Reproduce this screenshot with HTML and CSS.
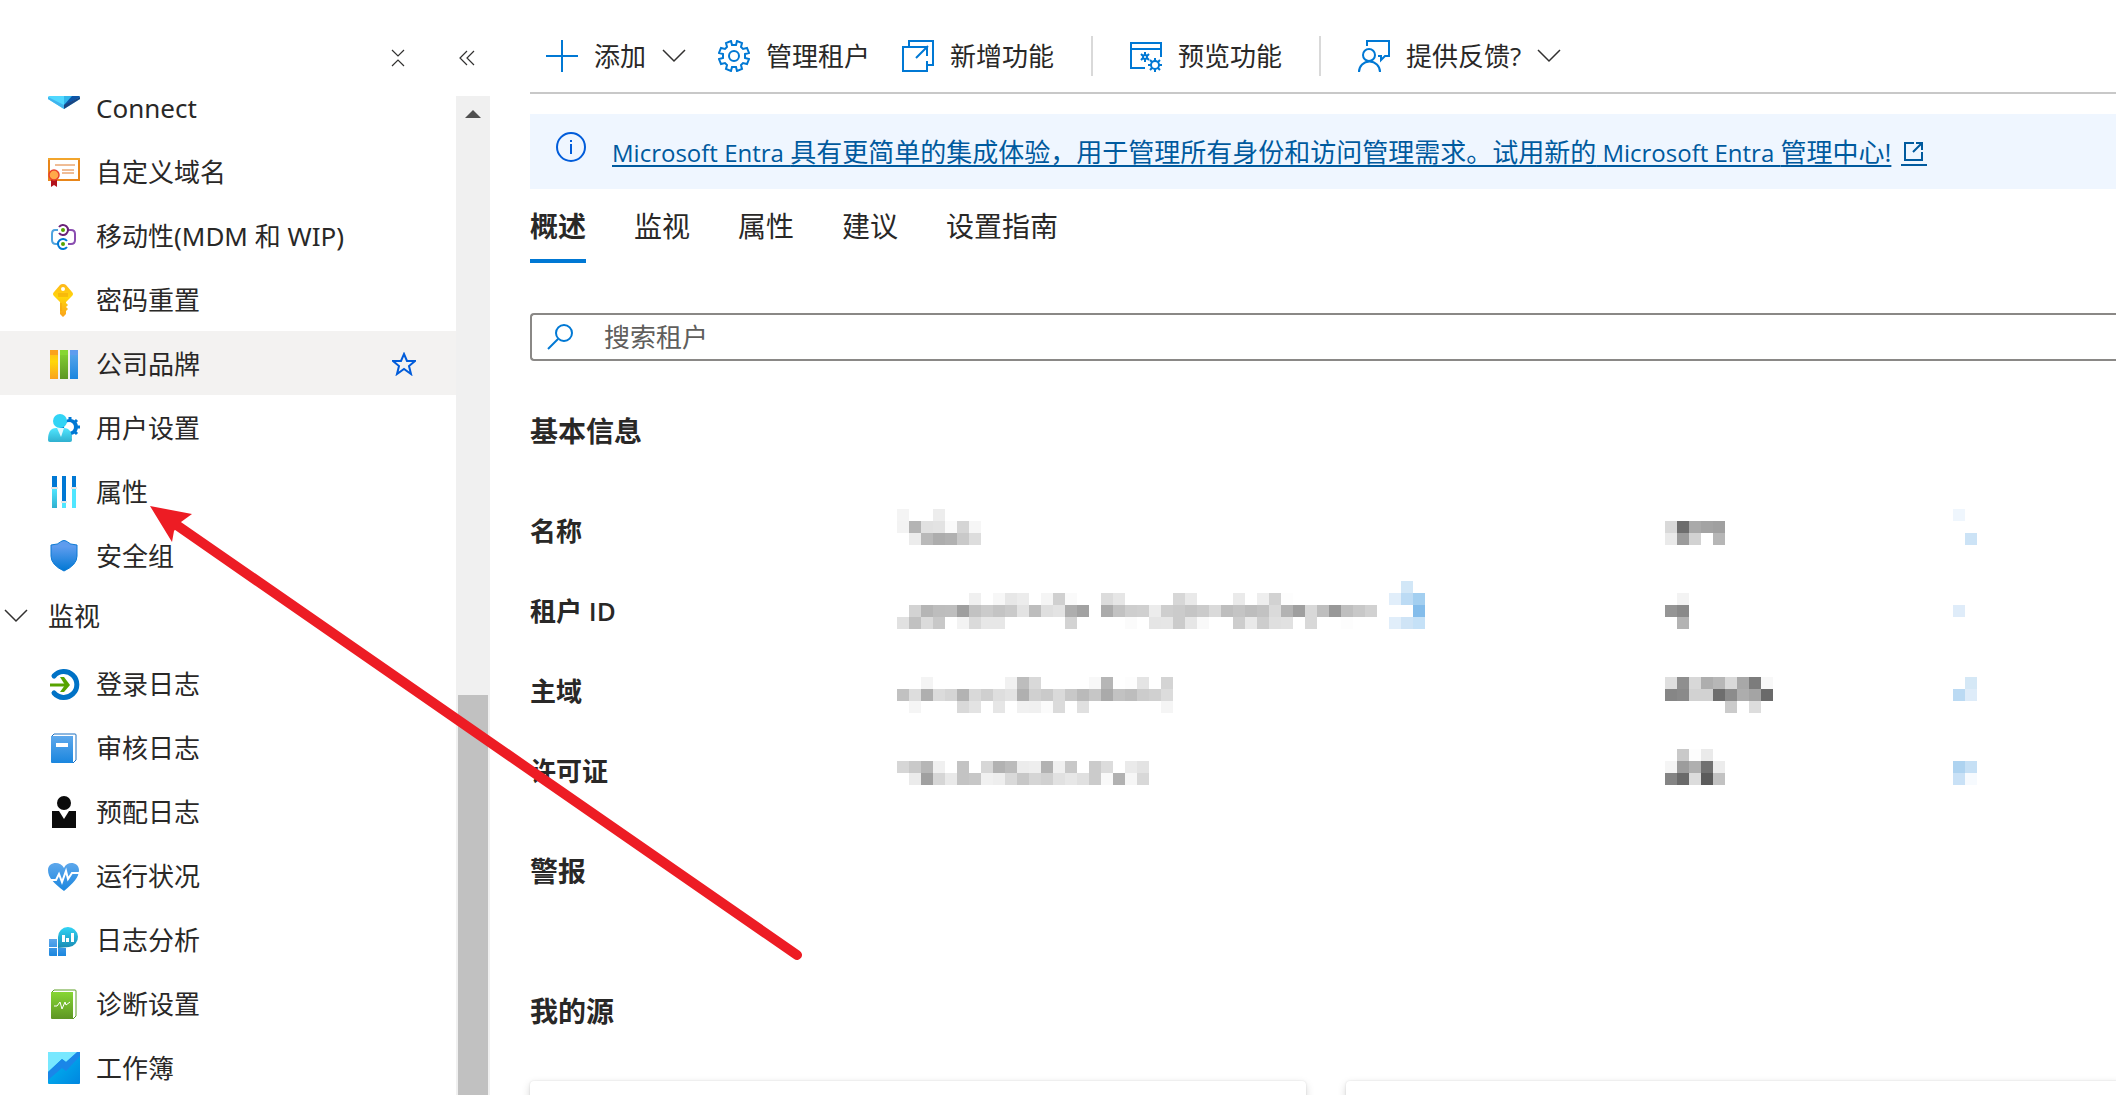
FILE: index.html
```html
<!DOCTYPE html>
<html lang="zh-CN">
<head>
    <meta charset="UTF-8">
    <meta name="viewport" content="width=device-width, initial-scale=1.0">
    <title>概述</title>
    <link rel="stylesheet" href="styles.css">
</head>
<body>
    <aside class="sidebar">
        <div class="sidebar-tools">
            <button type="button" class="icon-button" aria-label="折叠">
                <svg width="16" height="20" viewBox="0 0 16 20" class="line-icon"><path d="M2 2l6 6 6-6M2 18l6-6 6 6"/></svg>
            </button>
            <button type="button" class="icon-button" aria-label="收起">
                <svg width="18" height="20" viewBox="0 0 18 20" class="line-icon"><path d="M9 3l-7 7 7 7M16 3l-7 7 7 7"/></svg>
            </button>
        </div>

        <div class="sidebar-body">
            <nav class="menu">
                <a href="#connect" class="menu-item">
                    <svg class="menu-icon menu-icon-top" viewBox="0 0 32 32">
                        <path d="M16 2L32 20v2L16 32 0 22v-2z" fill="#50d8ff"/>
                        <path d="M16 2L32 20 16 29z" fill="#0d55a8"/>
                        <path d="M16 2v26l8-9z" fill="#32b8ec"/>
                        <path d="M0 20l16 8v4L0 22z" fill="#3fb4ee"/>
                        <path d="M16 28l16-8v2L16 32z" fill="#1b4582"/>
                    </svg>
                    <span>Connect</span>
                </a>
                <a href="#domains" class="menu-item">
                    <svg class="menu-icon" viewBox="0 0 32 32">
                        <rect x="1" y="3" width="30" height="21" fill="#fff" stroke="#e8861a" stroke-width="2"/>
                        <path d="M0 3h32" stroke="#f2a52c" stroke-width="2"/>
                        <path d="M7 9h20M14 14h12M14 17h12" stroke="#e07a2c"/>
                        <path d="M3 22h6v9l-3-2-3 2z" fill="#b3121b"/>
                        <circle cx="6" cy="19" r="5" fill="#ffa94a" stroke="#e8432c" stroke-width="1.5"/>
                    </svg>
                    <span>自定义域名</span>
                </a>
                <a href="#mobility" class="menu-item">
                    <svg class="menu-icon" viewBox="0 0 32 32" fill="none" stroke-width="2">
                        <path d="M10 10H7q-3 0-3 4v6q0 4 4 4h2" stroke="#4fa3df"/>
                        <path d="M20 10h3q4 0 4 4v6q0 4-4 4h-3" stroke="#8a4db0"/>
                        <path d="M11 7a5 5 0 1 1 0 6" stroke="#6b2278"/>
                        <path d="M19 21a5 5 0 1 0 0 6" stroke="#0078d4"/>
                        <circle cx="15" cy="10" r="2" fill="#57a300" stroke="none"/>
                        <circle cx="15" cy="24" r="2" fill="#57a300" stroke="none"/>
                    </svg>
                    <span>移动性(MDM 和 WIP)</span>
                </a>
                <a href="#password" class="menu-item">
                    <svg class="menu-icon" viewBox="0 0 32 32">
                        <path d="M15 0q2 0 3 1l6 7q2 2 0 4l-6 6v1l2 2-2 2 2 2-2 2v3l-3 3-3-3V18l-6-6q-2-2 0-4l6-7q1-1 3-1z" fill="url(#gold)"/>
                        <circle cx="15" cy="5" r="2" fill="#fff"/>
                        <path d="M10 10h10M10 12h10M13 19v8" stroke="#f0a30a"/>
                    </svg>
                    <span>密码重置</span>
                </a>
                <a href="#branding" class="menu-item menu-item-active">
                    <svg class="menu-icon" viewBox="0 0 32 32">
                        <path d="M2 2h8v29H2z" fill="url(#gold)"/><path d="M2 2h8v5H2z" fill="#faa21d"/>
                        <path d="M12 2h8v29h-8z" fill="url(#green)"/><path d="M12 2h8v5h-8z" fill="#86d633"/>
                        <path d="M22 2h8v29h-8z" fill="url(#blue)"/><path d="M22 2h8v5h-8z" fill="#5e9cee"/>
                    </svg>
                    <span>公司品牌</span>
                    <svg class="star" width="24" height="24" viewBox="0 0 24 24"><path d="M12 2l3 7h8l-6 5 2 8-7-5-7 5 2-8-6-5h8z"/></svg>
                </a>
                <a href="#user-settings" class="menu-item">
                    <svg class="menu-icon" viewBox="0 0 32 32">
                        <circle cx="22" cy="15" r="6" fill="none" stroke="#0078d4" stroke-width="4"/>
                        <path d="M22 5v4M22 21v4M12 15h20M15 8l14 14M15 22L29 8" stroke="#0078d4" stroke-width="3"/>
                        <circle cx="21" cy="15" r="5" fill="#fff"/>
                        <path d="M0 28q0-12 8-12h8q8 0 8 12 0 2-2 2H2q-2 0-2-2z" fill="url(#cyan)"/>
                        <path d="M9 16h7l-3 9z" fill="#e3f9ff"/>
                        <circle cx="12" cy="9" r="7" fill="#32d4f5"/>
                    </svg>
                    <span>用户设置</span>
                </a>
                <a href="#properties" class="menu-item">
                    <svg class="menu-icon" viewBox="0 0 32 32">
                        <path d="M4 0h5v11H4zM14 0h4v25h-4zM24 0h4v11h-4z" fill="#0078d4"/>
                        <path d="M3 11h7v2H3zM13 25h6v2h-6zM23 11h6v2h-6z" fill="#e6e6e6"/>
                        <path d="M4 13h5v19H4z" fill="url(#cyan)"/>
                        <path d="M14 27h4v5h-4zM24 13h4v19h-4z" fill="#50e6ff"/>
                    </svg>
                    <span>属性</span>
                </a>
                <a href="#security" class="menu-item">
                    <svg class="menu-icon" viewBox="0 0 32 32">
                        <path d="M3 5q7 0 11-4 2-1 4 0 4 4 11 4v11q0 9-13 15Q3 25 3 16z" fill="url(#shield)" stroke="#0a78d4"/>
                    </svg>
                    <span>安全组</span>
                </a>

                <button type="button" class="menu-group">
                    <svg width="24" height="16" viewBox="0 0 24 16" class="line-icon"><path d="M1 2l11 11L23 2"/></svg>
                    <span>监视</span>
                </button>

                <a href="#signin-logs" class="menu-item">
                    <svg class="menu-icon" viewBox="0 0 32 32" fill="none">
                        <path d="M6 8a13 13 0 1 1 0 17" stroke="#0072c6" stroke-width="5" stroke-linecap="round"/>
                        <path d="M2 17h17" stroke="#57a300" stroke-width="3"/>
                        <path d="M12 9h4l6 8-6 7h-4l5-7z" fill="#57a300"/>
                    </svg>
                    <span>登录日志</span>
                </a>
                <a href="#audit-logs" class="menu-item">
                    <svg class="menu-icon" viewBox="0 0 32 32">
                        <path d="M4 4l2-2h21q1 0 1 1v25l-3 3" fill="#fff" stroke="#1b6fc0"/>
                        <path d="M3 4h22v27H4q-1 0-1-1z" fill="url(#blue)"/>
                        <path d="M8 11h12v4H8z" fill="#fff"/>
                    </svg>
                    <span>审核日志</span>
                </a>
                <a href="#provisioning-logs" class="menu-item">
                    <svg class="menu-icon" viewBox="0 0 32 32">
                        <circle cx="16" cy="7" r="7" fill="#0b0b0b"/>
                        <path d="M4 15h7l5 8 5-8h7v17H4z" fill="#0b0b0b"/>
                    </svg>
                    <span>预配日志</span>
                </a>
                <a href="#health" class="menu-item">
                    <svg class="menu-icon" viewBox="0 0 32 32">
                        <path d="M16 31C6 23 0 18 0 10c0-8 12-10 16-2C19 0 31 2 31 10c0 8-6 13-15 21z" fill="url(#blue)"/>
                        <path d="M3 20h5l3-6 3 8 4-11 2 8 4-6h8" fill="none" stroke="#fff" stroke-width="2"/>
                    </svg>
                    <span>运行状况</span>
                </a>
                <a href="#log-analytics" class="menu-item">
                    <svg class="menu-icon" viewBox="0 0 32 32">
                        <path d="M1 15h8v8H1zM1 24h8v8H2q-1 0-1-1zM10 24h8v8h-8z" fill="url(#blue)"/>
                        <path d="M10 24V13a10 10 0 1 1 11 10z" fill="url(#cyandeep)"/>
                        <path d="M14 11h3v7h-3zM18 14h3v4h-3zM23 9h3v9h-3z" fill="#fff"/>
                    </svg>
                    <span>日志分析</span>
                </a>
                <a href="#diagnostics" class="menu-item">
                    <svg class="menu-icon" viewBox="0 0 32 32">
                        <path d="M4 4l2-2h21q1 0 1 1v25l-3 3" fill="#fff" stroke="#5c9e24"/>
                        <path d="M3 4h22v27H4q-1 0-1-1z" fill="url(#green)"/>
                        <path d="M6 18h3l3-4 2 7 3-7 1 3 4-3" fill="none" stroke="#fff"/>
                    </svg>
                    <span>诊断设置</span>
                </a>
                <a href="#workbooks" class="menu-item">
                    <svg class="menu-icon" viewBox="0 0 32 32">
                        <rect width="32" height="32" rx="1" fill="url(#sky)"/>
                        <path d="M0 0h30L18 10l-4-3L0 20z" fill="#78e8ff"/>
                        <path d="M0 20L14 7l4 3L29 0h3v4L18 19l-4-3L0 28z" fill="#1a86e8"/>
                    </svg>
                    <span>工作簿</span>
                </a>
            </nav>
            <div class="scroll-track">
                <svg width="16" height="8" viewBox="0 0 16 8"><path d="M0 8l8-8 8 8z" fill="#505050"/></svg>
                <div class="scroll-thumb"></div>
            </div>
        </div>
    </aside>

    <main class="content">
        <div class="toolbar">
            <button type="button" class="command">
                <svg class="command-icon" viewBox="0 0 32 32"><path d="M16 0v32M0 16h32"/></svg>
                添加
                <svg width="24" height="16" viewBox="0 0 24 16" class="line-icon"><path d="M1 2l11 11L23 2"/></svg>
            </button>
            <button type="button" class="command">
                <svg class="command-icon" viewBox="0 0 32 32">
                    <path d="M13 1l1 4h4l1-4 5 2-1 4 2 2 4-1 2 5-4 1v4l4 1-2 5-4-1-2 2 1 4-5 2-1-4h-4l-1 4-5-2 1-4-2-2-4 1-2-5 4-1v-4l-4-1 2-5 4 1 2-2-1-4z"/>
                    <circle cx="16" cy="16" r="5"/>
                </svg>
                管理租户
            </button>
            <button type="button" class="command">
                <svg class="command-icon" viewBox="0 0 32 32"><path d="M7 7V1h24v24h-5M17 7H1v24h24V21M14 18L26 6M17 7h8v9"/></svg>
                新增功能
            </button>
            <span class="divider"></span>
            <button type="button" class="command">
                <svg class="command-icon" viewBox="0 0 32 32">
                    <path d="M15 28H1V3h30v14M1 9h30"/>
                    <circle cx="15" cy="17" r="2"/>
                    <path d="M15 12v3M15 19v3M11 14l2 2M17 18l2 2M11 20l2-2M17 16l2-2"/>
                    <circle cx="25" cy="25" r="4"/>
                    <path d="M25 18v3M25 29v3M18 25h3M29 25h3M20 20l2 2M28 28l2 2M20 30l2-2M28 22l2-2"/>
                </svg>
                预览功能
            </button>
            <span class="divider"></span>
            <button type="button" class="command">
                <svg class="command-icon" viewBox="0 0 32 32">
                    <circle cx="11" cy="15" r="6"/>
                    <path d="M1 32a10 10 0 0 1 21 0M9 6V1h22v15h-4l-4 4v-4h-3"/>
                </svg>
                提供反馈?
                <svg width="24" height="16" viewBox="0 0 24 16" class="line-icon"><path d="M1 2l11 11L23 2"/></svg>
            </button>
        </div>

        <div class="banner">
            <svg class="banner-info" viewBox="0 0 30 30"><circle cx="15" cy="15" r="14"/><path d="M15 12v10M15 8v2"/></svg>
            <a href="#entra"><span class="brand">Microsoft Entra </span>具有更简单的集成体验，用于管理所有身份和访问管理需求。试用新的<span class="brand"> Microsoft Entra </span>管理中心!</a>
            <a href="#entra" class="banner-open" aria-label="打开">
                <svg width="26" height="24" viewBox="0 0 26 24"><path d="M13 3H4v17h17v-8M12 12l9-9M15 3h6v7"/></svg>
            </a>
        </div>

        <nav class="tabs">
            <a href="#overview" class="tab tab-active">概述</a>
            <a href="#monitor" class="tab">监视</a>
            <a href="#props" class="tab">属性</a>
            <a href="#advice" class="tab">建议</a>
            <a href="#guide" class="tab">设置指南</a>
        </nav>

        <label class="search">
            <svg width="28" height="28" viewBox="0 0 28 28"><circle cx="17" cy="10" r="8"/><path d="M11 16L1 26"/></svg>
            <input type="search" placeholder="搜索租户" aria-label="搜索租户">
        </label>

        <h2>基本信息</h2>
        <table class="info">
            <colgroup>
                <col class="col-label">
                <col class="col-value">
                <col class="col-kind">
                <col>
            </colgroup>
            <tr>
                <th scope="row">名称</th>
                <td><svg class="mosaic" data-y="18" data-cells="f4 @3 ed/f3 b4 e1 e3 fa d5 f6/@1 ec b9 ad b1 c9 dd"></svg></td>
                <td><svg class="mosaic" data-y="30" data-cells="d9 6d a9 a3 a0/ea 9b d2 @4 b6"></svg></td>
                <td><svg class="mosaic" data-y="18" data-cells="eff6fd/@0/@1 cce3f6"></svg></td>
            </tr>
            <tr>
                <th scope="row">租户 ID</th>
                <td><svg class="mosaic" data-y="10" data-cells="@42 d2e7f7/@6 f0 @8 f7 e7 ec @12 f5 d0 fa @17 dc e6 @23 d7 e9 @28 ea @30 ee d2 fd @41 e1eefa bcdbf4 a3cff0/@1 d3 b5 bd be 9f c2 cb c4 ca e3 bd df e3 ae a2 @17 ab c2 ce d0 ec ce cb c5 cb da be c4 bd c2 da b3 9f d8 be 98 bf c8 d1 @43 84bdeb/e1 c1 db c8 @5 f3 da e7 e7 @14 d3 @19 fb @21 e5 e6 cb e6 f9 @28 cd e9 cd df e1 @34 d8 @37 fd @41 e1eefa cfe4f6 c5e1f7"></svg></td>
                <td><svg class="mosaic" data-y="22" data-cells="@1 f3/95 8a/@1 b3"></svg></td>
                <td><svg class="mosaic" data-y="34" data-cells="dfecf9"></svg></td>
            </tr>
            <tr>
                <th scope="row">主域</th>
                <td><svg class="mosaic" data-y="26" data-cells="@2 f4 @9 f1 bd d9 @16 f8 b6 @19 fd e4 @22 d4/c1 dd af db d5 b3 d9 cf de e3 b0 d0 ca da c8 ba c6 aa c2 bd cc d0 dc/@1 f5 @5 d9 e3 @8 e6 @10 f1 f0 fb db @15 e0 @22 f5"></svg></td>
                <td><svg class="mosaic" data-y="26" data-cells="df 8f d8 ae b7 d9 a8 7c f8/86 8a d2 d2 6e 8c ad a4 6a/@5 cb @7 dd"></svg></td>
                <td><svg class="mosaic" data-y="26" data-cells="@1 d5e8f6/bbdaf3 deecf9"></svg></td>
            </tr>
            <tr>
                <th scope="row">许可证</th>
                <td><svg class="mosaic" data-y="30" data-cells="d6 c9 b6 f0 @5 c3 @7 d7 b2 bb ec ee b2 f0 c8 @16 cb dc @19 ea e3/@1 eb a0 d6 e9 c3 c7 f1 ee d9 c7 d5 d0 e1 e7 e0 cb f9 b1 f6 d8"></svg></td>
                <td><svg class="mosaic" data-y="18" data-cells="@1 c9 fd ea/f5 9c af 71 ec/84 6a dc 5b c2"></svg></td>
                <td><svg class="mosaic" data-y="30" data-cells="aed3f0 c6e0f5/c9e1f6 f6fafe"></svg></td>
            </tr>
        </table>

        <h2 class="alerts">警报</h2>
        <h2 class="feed">我的源</h2>
        <div class="cards">
            <div class="card"></div>
            <div class="card"></div>
        </div>
    </main>

    <!-- Pointer to the properties item -->
    <svg class="pointer" width="660" height="470" viewBox="0 0 660 470">
        <path d="M28 20L647 449" stroke="#ed1c24" stroke-width="10" stroke-linecap="round"/>
        <path d="M0 0l42 8-11 8-7 9-2 11z" fill="#ed1c24"/>
    </svg>

    <!-- Shared gradients -->
    <svg width="0" height="0" class="defs">
        <defs>
            <linearGradient id="gold" x2="0" y2="1"><stop stop-color="#ffb71b"/><stop offset=".4" stop-color="#ffd60a"/><stop offset="1" stop-color="#faa21d"/></linearGradient>
            <linearGradient id="green" x2="0" y2="1"><stop stop-color="#86d633"/><stop offset="1" stop-color="#5e9624"/></linearGradient>
            <linearGradient id="blue" x2="0" y2="1"><stop stop-color="#5ea8ec"/><stop offset="1" stop-color="#1a86de"/></linearGradient>
            <linearGradient id="shield" x2="0" y2="1"><stop offset=".2" stop-color="#5e9cee"/><stop offset="1" stop-color="#0078d4"/></linearGradient>
            <linearGradient id="cyan" x2="0" y2="1"><stop stop-color="#50e6ff"/><stop offset="1" stop-color="#2fb0cf"/></linearGradient>
            <linearGradient id="cyandeep" x2="0" y2="1"><stop stop-color="#32d4f5"/><stop offset="1" stop-color="#198ab3"/></linearGradient>
            <linearGradient id="sky" x2="1" y2="1"><stop stop-color="#00bcf2"/><stop offset="1" stop-color="#0086e0"/></linearGradient>
        </defs>
    </svg>
    <script src="mosaic.js"></script>
</body>
</html>
```
FILE: styles.css
```css
* {
    box-sizing: border-box;
}

body {
    font-family: "Open Sans", "Noto Sans CJK SC", sans-serif;
    font-size: 26px;
    line-height: 36px;
    margin: 0;
    height: 100vh;
    overflow: hidden;
    display: flex;
    background-color: #fff;
    color: #292827;
}

button {
    font: inherit;
    color: inherit;
    background: none;
    border: none;
    padding: 0;
    cursor: pointer;
}

svg {
    flex-shrink: 0;
}

.line-icon {
    fill: none;
    stroke: #323130;
    stroke-width: 1.5;
}

.sidebar {
    width: 490px;
    flex-shrink: 0;
    display: flex;
    flex-direction: column;
    font-family: "Noto Sans", "Noto Sans CJK SC", sans-serif;
}

.sidebar-tools {
    height: 96px;
    flex-shrink: 0;
    display: flex;
    justify-content: flex-end;
    align-items: center;
    gap: 52px;
    padding: 20px 14px 0 0;
}

.icon-button {
    display: flex;
}

.icon-button .line-icon {
    stroke-width: 1.2;
}

.sidebar-body {
    flex: 1;
    min-height: 0;
    display: flex;
    overflow: hidden;
}

.menu {
    flex: 1;
    margin-top: -21px;
}

.menu-item {
    display: flex;
    align-items: center;
    gap: 16px;
    height: 64px;
    padding: 2px 40px 0 48px;
    line-height: 24px;
    color: inherit;
    text-decoration: none;
}

.menu-item-active {
    background-color: #f3f2f1;
}

.menu-icon {
    width: 32px;
    height: 32px;
    overflow: visible;
}

.menu-icon-top {
    align-self: flex-start;
}

.star {
    margin-left: auto;
    fill: none;
    stroke: #015cda;
    stroke-width: 2;
}

.menu-group {
    display: flex;
    align-items: center;
    gap: 20px;
    width: 100%;
    height: 64px;
    padding: 0 0 6px 4px;
}

.scroll-track {
    width: 34px;
    display: flex;
    flex-direction: column;
    align-items: center;
    padding-top: 14px;
    background-color: #f0f0f0;
}

.scroll-thumb {
    width: 30px;
    height: 400px;
    margin-top: auto;
    background-color: #c1c1c1;
}

.content {
    flex: 1;
    min-width: 0;
    padding-left: 40px;
    overflow: hidden;
}

.toolbar {
    display: flex;
    align-items: center;
    gap: 32px;
    height: 94px;
    padding: 20px 0 0 16px;
    border-bottom: 2px solid #c8c8c8;
}

.command {
    display: flex;
    align-items: center;
    gap: 16px;
    white-space: nowrap;
}

.command-icon {
    width: 32px;
    height: 32px;
    fill: none;
    stroke: #0078d4;
    stroke-width: 2;
}

.divider {
    width: 2px;
    height: 40px;
    margin: 0 5px;
    background-color: #d9d9d9;
}

.banner {
    display: flex;
    align-items: center;
    height: 75px;
    margin-top: 20px;
    padding: 2px 0 0 26px;
    background-color: #eff6ff;
    white-space: nowrap;
}

.banner a {
    color: #005a9e;
    text-decoration-thickness: 2px;
    text-underline-offset: 3px;
    text-decoration-skip-ink: none;
}

.brand {
    font-size: 24px;
}

.banner-info {
    width: 30px;
    height: 30px;
    margin: 0 26px 12px 0;
    fill: none;
    stroke: #015cda;
    stroke-width: 2;
}

.banner .banner-open {
    display: flex;
    margin-left: 10px;
    border-bottom: 2px solid #005a9e;
}

.banner-open svg {
    fill: none;
    stroke: #005a9e;
    stroke-width: 2;
}

.tabs {
    display: flex;
    gap: 48px;
    margin-top: 19px;
    font-size: 28px;
}

.tab {
    padding-bottom: 15px;
    border-bottom: 4px solid transparent;
    color: inherit;
    text-decoration: none;
}

.tab-active {
    font-weight: 700;
    border-bottom-color: #0078d4;
}

.search {
    display: flex;
    align-items: center;
    gap: 29px;
    height: 48px;
    margin-top: 50px;
    padding-left: 15px;
    border: 2px solid #8a8886;
    border-right: none;
    border-radius: 4px 0 0 4px;
}

.search svg {
    fill: none;
    stroke: #0078d4;
    stroke-width: 2;
}

.search input {
    flex: 1;
    padding: 0;
    border: none;
    outline: none;
    background: none;
    font: inherit;
    color: inherit;
}

.search input::placeholder {
    color: #605e5c;
}

h2 {
    margin: 50px 0 40px;
    font-size: 28px;
    line-height: 40px;
    font-weight: 700;
}

.info {
    width: 100%;
    table-layout: fixed;
    border-collapse: collapse;
}

.info th,
.info td {
    height: 80px;
    padding: 0;
    text-align: left;
    font-weight: 600;
}

.col-label {
    width: 367px;
}

.col-value {
    width: 768px;
}

.col-kind {
    width: 288px;
}

.mosaic {
    display: block;
    width: 100%;
    height: 80px;
}

.alerts {
    margin: 40px 0 100px;
}

.feed {
    margin: 0 0 50px;
}

/* The second card runs a little past the window edge */
.cards {
    display: grid;
    grid-template-columns: 1fr 1fr;
    gap: 40px;
    margin-right: -6px;
}

.card {
    height: 240px;
    border-radius: 4px;
    box-shadow: 0 3px 8px rgba(0, 0, 0, 0.16), 0 0 2px rgba(0, 0, 0, 0.12);
}

.pointer {
    position: absolute;
    left: 150px;
    top: 506px;
    overflow: visible;
    pointer-events: none;
}

.defs {
    position: absolute;
}
```
FILE: mosaic.js
```javascript
// Cells are 12px squares: two digits for a grey, six for a colour, @n jumps to column n
const SIZE = 12;

document.querySelectorAll('.mosaic').forEach(svg => {
    const top = Number(svg.dataset.y);
    svg.dataset.cells.split('/').forEach((line, row) => {
        let col = 0;
        line.split(' ').forEach(cell => {
            if (cell[0] === '@') {
                col = Number(cell.slice(1));
                return;
            }
            const rect = document.createElementNS('http://www.w3.org/2000/svg', 'rect');
            rect.setAttribute('x', col * SIZE);
            rect.setAttribute('y', top + row * SIZE);
            rect.setAttribute('width', SIZE);
            rect.setAttribute('height', SIZE);
            rect.setAttribute('fill', '#' + (cell.length === 2 ? cell.repeat(3) : cell));
            svg.appendChild(rect);
            col++;
        });
    });
});
```
